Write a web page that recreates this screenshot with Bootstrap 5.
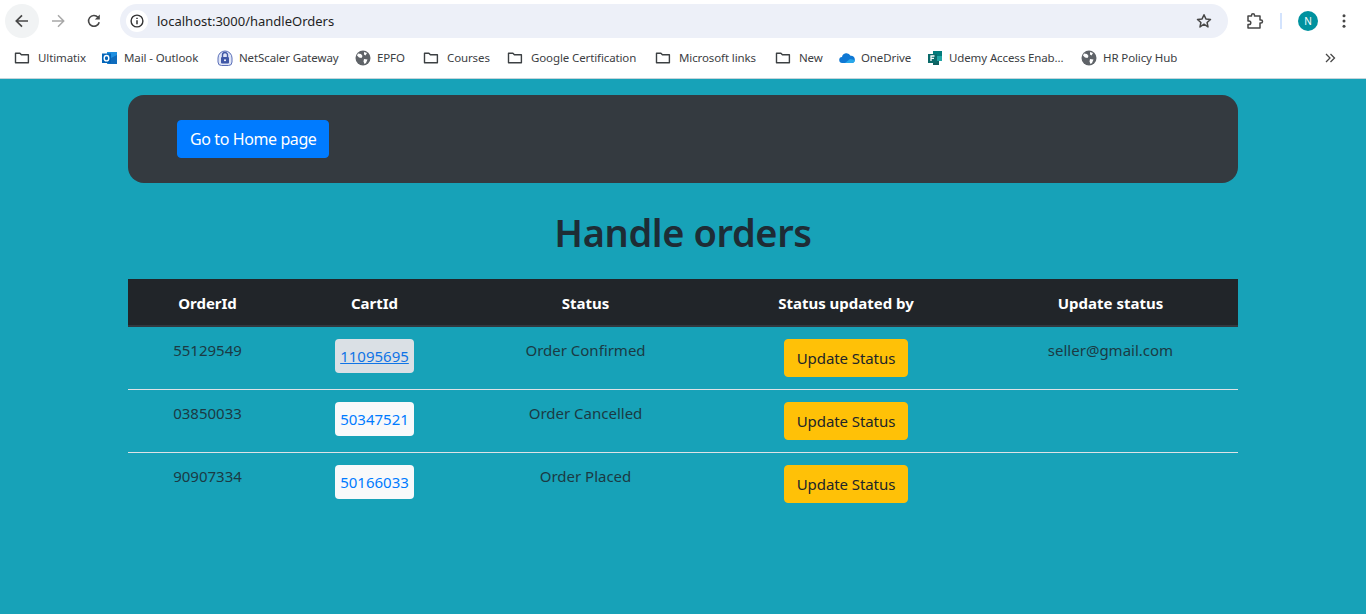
<!doctype html>
<html lang="en">
  <head>
    <meta charset="utf-8">
    <meta name="viewport" content="width=device-width, initial-scale=1">
    <title>Handle orders</title>
    <link href="https://cdn.jsdelivr.net/npm/bootstrap@5.3.5/dist/css/bootstrap.min.css" rel="stylesheet">
    <style>
      html, body { height: 100%; }
      body { background: #17a2b8; font-family: "Noto Sans", "Open Sans", sans-serif; color: #212529; overflow: hidden; }

      /* browser chrome */
      .chrome-bar { background: #fff; height: 79px; border-bottom: 1px solid #c4d4da; }
      .tool-row { height: 42px; padding: 4px 0 4px 5px; }
      .tool-btn { width: 34px; height: 34px; flex: none; border-radius: 50%; }
      .tool-btn.is-active { background: #f1f3f4; }
      .tool-gap-a { margin-left: 2px; }
      .tool-gap-b { margin-left: 2px; }
      .tool-ext { margin-left: 10px; }
      .tool-menu { margin-left: 9px; }
      .omni { background: #edf0f8; height: 34px; width: 1108px; margin-left: 9px; border-radius: 17px; padding: 0 7px 0 6px; flex: none; }
      .omni-info { width: 22px; height: 22px; background: #fff; border-radius: 50%; flex: none; }
      .omni-url { font-size: 13px; color: #1f1f1f; margin-left: 9px; padding-top: 1px; }
      .omni-star { margin-right: 9px; }
      .tool-sep { width: 2px; height: 16px; background: #d3e3fd; margin: 0 16px 0 8px; flex: none; }
      .avatar-dot { width: 20px; height: 20px; flex: none; border-radius: 50%; background: #00929f; color: #fff; font-size: 10px; line-height: 20px; text-align: center; }
      .mark-row { height: 36px; padding: 0 0 4px 14px; }
      .mark-item { font-size: 11.5px; letter-spacing: -.01em; color: #3c4043; white-space: nowrap; flex: none; }
      .mark-item svg { flex: none; margin-right: 8px; }
      .mark-item.tight svg { margin-right: 6px; }
      .mark-more { margin-left: auto; margin-right: 30px; }

      /* page */
      .page-wrap { width: 1110px; margin: 16px auto 0; }
      .hero-box { background: #343a40; border-radius: 16px; padding: 25px 49px; }
      .btn-home { background: #007bff; border-color: #007bff; border-radius: 4px; font-size: 16px; padding: 6px 12px; letter-spacing: -.025em; }
      .page-title { font-size: 38px; font-weight: 600; line-height: 48px; margin: 25px 0 23px; text-align: center; color: #1e2c35; letter-spacing: -.01em; }

      .orders-table { --bs-table-bg: transparent; --bs-table-color: #212529; margin: 0; table-layout: fixed; }
      .orders-table thead th { background: #212529; color: #fff; font-size: 15px; font-weight: 700; padding: 12px 12px 10px; border-bottom: 2px solid #32383e; line-height: 24px; }
      .orders-table tbody td { padding: 12px; line-height: 24px; font-size: 15px; color: #1b3a44; background: transparent; }
      .orders-table tbody td.cell-text { line-height: 22px; }
      .orders-table tbody tr + tr td { border-top: 1px solid #dee2e6; }
      .cart-link { display: inline-block; background: #f8f9fa; color: #007bff; text-decoration: none; padding: 5px; border-radius: 4px; font-size: 15px; }
      .cart-link.is-hover { background: #dae0e5; color: #0f74e6; text-decoration: underline; }
      .btn-update { background: #ffc107; border-color: #ffc107; border-radius: 4px; color: #212529; font-size: 15px; padding: 6px 12px; line-height: 24px; letter-spacing: -.005em; }
    </style>
  </head>

  <body>

    <svg width="0" height="0" class="d-block">
      <symbol id="folder" viewBox="0 0 16 16"><path d="M1.500 3.200h4.400l1.500 1.600h7v8h-12.900z" fill="none" stroke="#3c4043" stroke-width="1.400" stroke-linejoin="round"/></symbol>
      <symbol id="globe" viewBox="0 0 16 16"><circle cx="8" cy="8" r="7.500" fill="#5f6368"/><path d="M3 3.500l3 .5 1.500 2-1 2-2.500-.5L2 5.500zM9 2l3 1-1.500 2.500L9 4.500zM9 9l3.500.5L11 13l-1.500 1-1-2.500z" fill="#fff"/></symbol>
      <symbol id="outlook" viewBox="0 0 16 16"><path d="M5 2h10v12H5z" fill="#1f8fe0"/><path d="M9 8l6-3v9H6z" fill="#0f6cbd"/><path d="M0 3.500h9v9.500H0z" fill="#0364b8"/><ellipse cx="4.500" cy="8.200" rx="2.300" ry="2.700" fill="none" stroke="#fff" stroke-width="1.400"/></symbol>
      <symbol id="lock" viewBox="0 0 16 16"><path d="M1 8a7 7 0 0 1 14 0v4a3.500 3.500 0 0 1-3.500 3.500h-7A3.500 3.500 0 0 1 1 12z" fill="#dfe5f7" stroke="#5a6fb8"/><rect x="4" y="7" width="8" height="6.500" rx="1" fill="#3f57a6"/><path d="M5.500 7V5a2.500 2.500 0 0 1 5 0v2" fill="none" stroke="#3f57a6" stroke-width="1.400"/><circle cx="8" cy="10.200" r="1" fill="#fff"/></symbol>
      <symbol id="cloud" viewBox="0 0 16 16"><path d="M3.500 13a3 3 0 0 1-.5-6 4.500 4.500 0 0 1 8.500-1.300A3.800 3.800 0 0 1 15.800 10c0 1.700-1.200 3-3 3z" fill="#0f78d4"/><path d="M6 13l5-4 4.800 1c0 1.700-1.200 3-3 3z" fill="#28a8ea"/></symbol>
      <symbol id="forms" viewBox="0 0 16 16"><path d="M6 1h9v5H6z" fill="#037c7c"/><path d="M6 6h9v5H6z" fill="#22a5a5"/><path d="M6 11h6v4H6z" fill="#0f5f5f"/><path d="M1 4h9v9H1z" fill="#0b6a6a"/><path d="M4 11V6h3.500M4 8.300h3" fill="none" stroke="#fff" stroke-width="1.300"/></symbol>
    </svg>

    <header class="chrome-bar">
      <div class="tool-row d-flex align-items-center">
        <div class="tool-btn is-active d-flex align-items-center justify-content-center">
          <svg width="16" height="16" viewBox="0 0 16 16"><path d="M14 8H2.500M8 2.300L2.300 8 8 13.700" fill="none" stroke="#474747" stroke-width="1.700"/></svg>
        </div>
        <div class="tool-btn tool-gap-a d-flex align-items-center justify-content-center">
          <svg width="16" height="16" viewBox="0 0 16 16"><path d="M2 8h11.500M8 2.300L13.700 8 8 13.700" fill="none" stroke="#a8a8a8" stroke-width="1.500"/></svg>
        </div>
        <div class="tool-btn tool-gap-b d-flex align-items-center justify-content-center">
          <svg width="16" height="16" viewBox="0 0 16 16"><path d="M13.200 9.200A5.400 5.400 0 1 1 12 4.300" fill="none" stroke="#474747" stroke-width="1.600"/><path d="M13.800 1.500v5h-5z" fill="#474747"/></svg>
        </div>
        <div class="omni d-flex align-items-center">
          <div class="omni-info d-flex align-items-center justify-content-center">
            <svg width="14" height="14" viewBox="0 0 14 14"><circle cx="7" cy="7" r="5.900" fill="none" stroke="#333" stroke-width="1.400"/><path d="M7 6.200v4M7 3.700v1.400" stroke="#333" stroke-width="1.500"/></svg>
          </div>
          <span class="omni-url">localhost:3000/handleOrders</span>
          <svg class="ms-auto omni-star" width="16" height="16" viewBox="0 0 16 16"><path d="M8 1.700l1.900 4.200 4.600.500-3.400 3.100.9 4.500L8 11.200l-4 2.800.9-4.500L1.500 6.400l4.600-.5z" fill="none" stroke="#474747" stroke-width="1.500" stroke-linejoin="round"/></svg>
        </div>
        <div class="tool-btn tool-ext d-flex align-items-center justify-content-center">
          <svg width="18" height="18" viewBox="0 0 18 18"><path d="M2 4h3.500V3.200a1.500 1.500 0 0 1 3 0V4H14v4h1a1.500 1.500 0 0 1 0 3h-1v5H2v-3.500h1a1.800 1.800 0 0 0 0-3.600H2z" fill="none" stroke="#474747" stroke-width="1.500" stroke-linejoin="round"/></svg>
        </div>
        <div class="tool-sep"></div>
        <div class="avatar-dot">N</div>
        <div class="tool-btn tool-menu d-flex align-items-center justify-content-center">
          <svg width="16" height="16" viewBox="0 0 16 16"><circle cx="8" cy="2.800" r="1.500" fill="#474747"/><circle cx="8" cy="8" r="1.500" fill="#474747"/><circle cx="8" cy="13.200" r="1.500" fill="#474747"/></svg>
        </div>
      </div>
      <div class="mark-row d-flex align-items-center gap-3" id="markRow">
        <svg class="mark-more" width="12" height="12" viewBox="0 0 12 12"><path d="M2 2l4 4-4 4M6.500 2l4 4-4 4" fill="none" stroke="#474747" stroke-width="1.300"/></svg>
      </div>
    </header>

    <main class="page-wrap">
      <div class="hero-box">
        <a href="#" class="btn btn-primary btn-home text-white">Go to Home page</a>
      </div>

      <h1 class="page-title">Handle orders</h1>

      <table class="table table-borderless text-center orders-table">
        <colgroup>
          <col style="width:159px"><col style="width:175px"><col style="width:247px"><col style="width:274px"><col style="width:255px">
        </colgroup>
        <thead>
          <tr>
            <th>OrderId</th>
            <th>CartId</th>
            <th>Status</th>
            <th>Status updated by</th>
            <th>Update status</th>
          </tr>
        </thead>
        <tbody id="orderRows"></tbody>
      </table>
    </main>

    <script src="https://cdn.jsdelivr.net/npm/bootstrap@5.3.5/dist/js/bootstrap.bundle.min.js"></script>
    <script>
      const bookmarks = [
        { icon: "folder", label: "Ultimatix", width: 48 },
        { icon: "outlook", label: "Mail - Outlook", width: 77, tight: true },
        { icon: "lock", label: "NetScaler Gateway", width: 100, tight: true },
        { icon: "globe", label: "EPFO", width: 30, tight: true },
        { icon: "folder", label: "Courses", width: 44 },
        { icon: "folder", label: "Google Certification", width: 108 },
        { icon: "folder", label: "Microsoft links", width: 80 },
        { icon: "folder", label: "New", width: 24 },
        { icon: "cloud", label: "OneDrive", width: 50, tight: true },
        { icon: "forms", label: "Udemy Access Enab...", width: 116, tight: true },
        { icon: "globe", label: "HR Policy Hub", width: 75, tight: true }
      ];

      const orders = [
        { orderId: "55129549", cartId: "11095695", status: "Order Confirmed", updatedBy: "seller@gmail.com", hover: true },
        { orderId: "03850033", cartId: "50347521", status: "Order Cancelled", updatedBy: "" },
        { orderId: "90907334", cartId: "50166033", status: "Order Placed", updatedBy: "" }
      ];

      document.getElementById("markRow").insertAdjacentHTML("afterbegin", bookmarks.map(mark => `
        <div class="mark-item ${mark.tight ? "tight" : ""} d-flex align-items-center">
          <svg width="16" height="16"><use href="#${mark.icon}"/></svg>
          <span style="width:${mark.width}px">${mark.label}</span>
        </div>`).join(""));

      document.getElementById("orderRows").innerHTML = orders.map(order => `
        <tr>
          <td class="cell-text">${order.orderId}</td>
          <td><a href="#" class="cart-link ${order.hover ? "is-hover" : ""}">${order.cartId}</a></td>
          <td class="cell-text">${order.status}</td>
          <td><button type="button" class="btn btn-update">Update Status</button></td>
          <td class="cell-text">${order.updatedBy}</td>
        </tr>`).join("");
    </script>

  </body>
</html>
